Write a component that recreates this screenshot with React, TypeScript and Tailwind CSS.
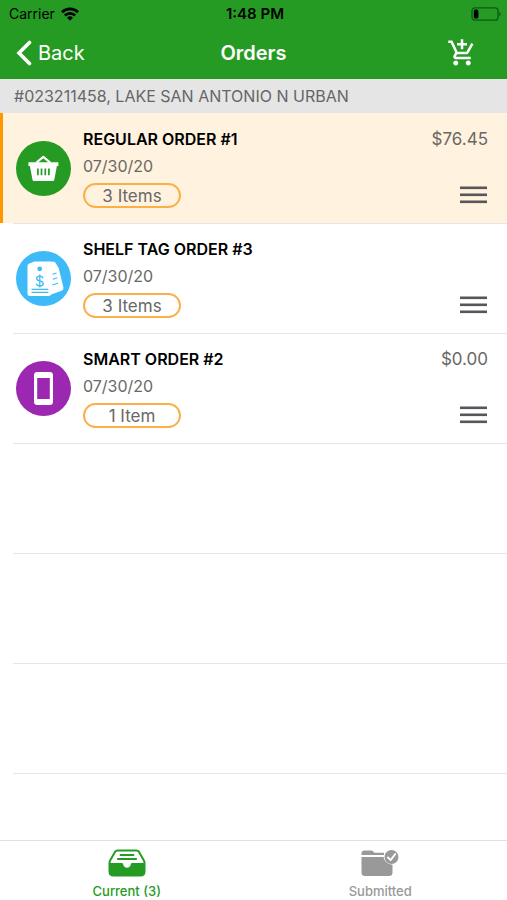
import type { ReactNode } from "react";
import { MdAddShoppingCart } from "react-icons/md";

interface Order {
  id: number;
  name: string;
  date: string;
  items: string;
  total?: string;
  color: string;
  icon: ReactNode;
  selected?: boolean;
}

function IconWifi() {
  return (
    <svg className="w-[18px] h-[14px]" viewBox="0 0 18 14" fill="none" stroke="currentColor" strokeWidth="2.7">
      <path d="M1 5.2A11.4 11.4 0 0 1 17 5.2" />
      <path d="M3.9 8.5A7.2 7.2 0 0 1 14.1 8.5" />
      <path d="M9 13.8L6.1 10.8A4.1 4.1 0 0 1 11.9 10.8Z" fill="currentColor" stroke="none" />
    </svg>
  );
}

function IconBattery() {
  return (
    <svg className="w-[30px] h-[14px]" viewBox="0 0 30 14">
      <rect x="1" y="0.8" width="26" height="12.4" rx="3" fill="none" stroke="#0c5a12" strokeWidth="1.3" />
      <rect x="2.8" y="2.4" width="4.6" height="9.2" rx="1.6" fill="#000" />
      <path d="M28.3 4.8v4.4c1.8-.8 1.8-3.6 0-4.4z" fill="#0c5a12" />
    </svg>
  );
}

function IconBack() {
  return (
    <svg className="w-4 h-[26px]" viewBox="0 0 16 26" fill="none" stroke="currentColor" strokeWidth="3.6" strokeLinecap="round">
      <path d="M13.5 2.5L3 13L13.5 23.5" />
    </svg>
  );
}

function IconBasket() {
  return (
    <svg className="w-[55px] h-[55px]" viewBox="0 0 55 55" fill="none">
      <path d="M20.5 21.5L27.3 15.8L34.1 21.5" stroke="#fff" strokeWidth="2.2" strokeLinejoin="round" />
      <path d="M12.4 21.2h30v3.8h-1.5l-2.6 13.8q-.3 1.2-1.4 1.2H17.9q-1.100 0-1.400-1.200L13.900 25h-1.500z" fill="#fff" />
      <path d="M21.9 27.600v6.600M25.500 27.600v6.600M29.300 27.600v6.600M32.900 27.600v6.600" stroke="#259b24" strokeWidth="1.7" />
    </svg>
  );
}

function IconShelfTags() {
  return (
    <svg className="w-[55px] h-[55px]" viewBox="0 0 55 55" fill="none">
      <path d="M31 10.300l6.500.4q1.400.1 2.100 1.300l2.600 4.200q.5.800.7 1.800l4.500 18.500q.5 2.400-1.800 3.200L33 44.200z" fill="#fff" />
      <path d="M15.500 11.700l2-.9q.6-.3 1.400-.3h11.500l3 1.500q1.600.8 1.600 2.500v28q0 2.500-2.500 2.500H14q-2.500 0-2.500-2.500V15q0-2.200 4-3.300z" fill="#fff" />
      <circle cx="23.700" cy="17.800" r="2.400" fill="#3fbaf8" />
      <path d="M27 27.200c-.4-1.400-1.600-2.100-3.300-2.100-1.900 0-3.100.9-3.100 2.300 0 3.500 6.600 1.600 6.600 5.100 0 1.600-1.300 2.500-3.300 2.500s-3.200-.8-3.500-2.300M23.800 23.600v12.900" stroke="#3fbaf8" strokeWidth="1.300" />
      <path d="M15.500 38.400h16.800M15.500 41.400h16.800" stroke="#3fbaf8" strokeWidth="1.300" />
      <path d="M36.500 23.300l4-1.300M36.800 28.300l4.500-1.500M36.300 34l5.700-1.800" stroke="#3fbaf8" strokeWidth="1.200" />
    </svg>
  );
}

function IconPhone() {
  return (
    <svg className="w-[55px] h-[55px]" viewBox="0 0 55 55">
      <path
        fill="#fff"
        fillRule="evenodd"
        d="M21.300 11h12.400q3.300 0 3.300 3.300v26.400q0 3.300-3.300 3.300H21.300q-3.300 0-3.300-3.300V14.300q0-3.300 3.300-3.300zM21.200 17v21h12.600V17z"
      />
    </svg>
  );
}

function IconMenu() {
  return (
    <svg className="w-7 h-[18px]" viewBox="0 0 28 18" fill="#58565a">
      <rect y="0.500" width="27" height="2.600" />
      <rect y="7.500" width="27" height="2.600" />
      <rect y="14.500" width="27" height="2.600" />
    </svg>
  );
}

function IconInbox() {
  return (
    <svg className="w-[38px] h-7" viewBox="0 0 38 28" fill="none">
      <path d="M9.500 1.500h19q1.500 0 2.400 1.200l5 8.800q.6 1 .6 2.500v8.500q0 4-4 4H5.500q-4 0-4-4V14q0-1.500.6-2.500l5-8.800Q8 1.500 9.500 1.500z" stroke="#259b24" strokeWidth="2" />
      <path d="M1.500 14h12.200q1.300 0 1.500 1.200c.5 4.600 7.100 4.600 7.600 0q.2-1.200 1.500-1.200h12.200v8.500q0 4-4 4H5.500q-4 0-4-4z" fill="#259b24" />
      <path d="M12.500 6h13M9.800 10h18.400" stroke="#259b24" strokeWidth="1.800" strokeLinecap="round" />
    </svg>
  );
}

function IconFolderCheck() {
  return (
    <svg className="w-[38px] h-7" viewBox="0 0 38 28" fill="none">
      <path d="M0.500 6V4.500q0-3 3-3h6.500q1.500 0 2.500 1.200l1 1.100h9.500V6z" fill="#999" />
      <path d="M0.500 8h22q1.200 7 9 7.700v7.800q0 3.500-3.500 3.500H4q-3.500 0-3.500-3.500z" fill="#999" />
      <circle cx="30.500" cy="8" r="7" fill="#999" />
      <path d="M27 8.500l2.600 2.600 4.600-6" stroke="#fff" strokeWidth="1.900" strokeLinecap="round" strokeLinejoin="round" />
    </svg>
  );
}

const orders: Order[] = [
  {
    id: 1,
    name: "REGULAR ORDER #1",
    date: "07/30/20",
    items: "3 Items",
    total: "$76.45",
    color: "bg-[#259b24]",
    icon: <IconBasket />,
    selected: true,
  },
  {
    id: 3,
    name: "SHELF TAG ORDER #3",
    date: "07/30/20",
    items: "3 Items",
    color: "bg-[#3fbaf8]",
    icon: <IconShelfTags />,
  },
  {
    id: 2,
    name: "SMART ORDER #2",
    date: "07/30/20",
    items: "1 Item",
    total: "$0.00",
    color: "bg-[#9c27b0]",
    icon: <IconPhone />,
  },
];

function OrderRow({ order }: { order: Order }) {
  return (
    <li
      className={`flex border-l-3 ${order.selected ? "border-[#ff9800] bg-[#fff2de]" : "border-transparent"}`}
    >
      <div
        className={`flex-1 flex ml-2.5 pl-[3px] pt-[15px] pb-[15px] pr-[19px] border-t ${order.selected ? "border-transparent" : "border-[#e6e6e8]"}`}
      >
        <div className={`w-[55px] h-[55px] mt-3 rounded-full ${order.color}`}>
          {order.icon}
        </div>
        <div className="flex flex-col items-start gap-1.5 ml-3">
          <h2 className="text-base leading-5 font-semibold text-black">{order.name}</h2>
          <p className="text-base leading-[22px] text-[#6a6866]">{order.date}</p>
          <span className="w-[98px] h-[25px] rounded-full border-2 border-[#fbaf48] text-center text-[17px] leading-[22px] text-[#6a6866]">
            {order.items}
          </span>
        </div>
        <div className="ml-auto flex flex-col items-end justify-between pb-1">
          <span className="text-[17px] leading-5 text-[#6a6866]">{order.total}</span>
          <button type="button" aria-label={`Options for ${order.name}`}>
            <IconMenu />
          </button>
        </div>
      </div>
    </li>
  );
}

export default function App() {
  return (
    <div className="min-h-screen flex flex-col bg-white font-['Inter','Liberation_Sans',sans-serif]">
      <header className="bg-[#259b24]">
        <div className="grid grid-cols-3 items-center h-[27px] pl-[9px] pr-1.5 text-sm text-black">
          <div className="flex items-center gap-1.5">
            <span>Carrier</span>
            <IconWifi />
          </div>
          <span className="text-center text-[15px] font-semibold">1:48 PM</span>
          <div className="flex justify-end">
            <IconBattery />
          </div>
        </div>
        <div className="grid grid-cols-3 items-center h-[52px] pl-4 pr-[30px] text-white">
          <button type="button" className="flex items-center gap-1.5 text-xl">
            <IconBack />
            Back
          </button>
          <h1 className="text-center text-xl font-semibold ml-3.5">Orders</h1>
          <button type="button" aria-label="Add order" className="justify-self-end">
            <MdAddShoppingCart className="w-[30px] h-[30px]" />
          </button>
        </div>
      </header>

      <p className="h-[34px] px-3.5 bg-[#e5e5e6] text-base leading-[34px] text-[#666]">
        #023211458, LAKE SAN ANTONIO N URBAN
      </p>

      <main className="flex-1">
        <ul>
          {orders.map((order) => (
            <OrderRow key={order.id} order={order} />
          ))}
        </ul>
        {/* empty rows below the last order */}
        <div className="ml-[13px]">
          {[1, 2, 3].map((n) => (
            <div key={n} className="h-[110px] border-t border-[#e6e6e8]" />
          ))}
          <div className="border-t border-[#e6e6e8]" />
        </div>
      </main>

      <nav className="grid grid-cols-2 h-[60px] border-t border-[#e0e0e0] text-[13px] leading-4 font-medium">
        <button type="button" className="flex flex-col items-center pt-2 gap-1.5 text-[#259b24]">
          <IconInbox />
          Current (3)
        </button>
        <button type="button" className="flex flex-col items-center pt-2 gap-1.5 text-[#999]">
          <IconFolderCheck />
          Submitted
        </button>
      </nav>
    </div>
  );
}
